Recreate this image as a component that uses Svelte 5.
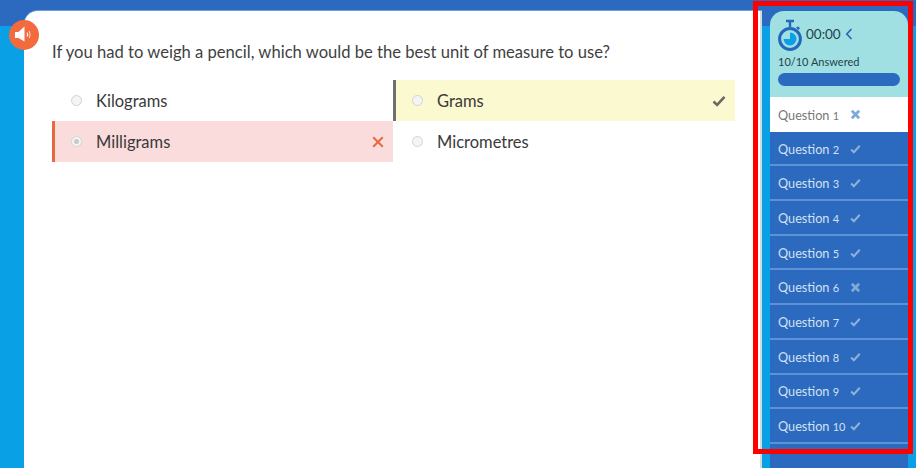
<script>
  const options = [
    { label: 'Kilograms', kind: '' },
    { label: 'Grams', kind: 'correct' },
    { label: 'Milligrams', kind: 'wrong' },
    { label: 'Micrometres', kind: '' }
  ];
  const questions = [1, 2, 3, 4, 5, 6, 7, 8, 9, 10].map((n) => ({ n, wrong: n === 1 || n === 6 }));
</script>

<div class="page">
  <header class="topbar"></header>
  <div class="body">
    <main class="card">
      <button class="sound" aria-label="Read aloud">
        <svg viewBox="0 0 30 30" width="30" height="30">
          <path d="M6 12h3.500l6-5.500v15L9.500 18H6z" fill="#fff" />
          <path d="M18 12.500q1.500 2 0 4" fill="none" stroke="#fff" stroke-width="1.200" />
          <path d="M20.200 11q2 3.500 0 7" fill="none" stroke="#fff" stroke-width="1" opacity=".75" />
        </svg>
      </button>
      <h1>If you had to weigh a pencil, which would be the best unit of measure to use?</h1>
      <div class="options">
        {#each options as o}
          <div class="option {o.kind}">
            <span class="radio"></span>
            <span class="label">{o.label}</span>
            {#if o.kind === 'correct'}
              <svg class="mark" viewBox="0 0 14 12" width="14" height="12"><path d="M1.500 6.500l3.600 3.400 7.400-8" fill="none" stroke="#6b6862" stroke-width="2.600" /></svg>
            {:else if o.kind === 'wrong'}
              <svg class="mark" viewBox="0 0 12 12" width="12" height="12"><path d="M1.200 1.200l9.600 9.600M10.800 1.200l-9.600 9.600" fill="none" stroke="#e8683f" stroke-width="2" /></svg>
            {/if}
          </div>
        {/each}
      </div>
    </main>
    <aside class="side">
      <div class="summary">
        <div class="timer">
          <svg class="watch" viewBox="0 0 24 33" width="24" height="33">
            <path d="M8 2h8M12 2v6" stroke="#2468bb" stroke-width="2.400" fill="none" />
            <path d="M19 8l2.200 2.200" stroke="#2468bb" stroke-width="2.400" />
            <circle cx="12" cy="20" r="10.400" fill="none" stroke="#2468bb" stroke-width="3" />
            <path d="M12 20V13.500A6.500 6.500 0 1 1 5.500 20z" fill="#0aa0e6" />
          </svg>
          <span class="time">00:00</span>
          <svg class="chev" viewBox="0 0 8 12" width="8" height="12"><path d="M6.500 1L1.800 6l4.700 5" fill="none" stroke="#2b6abf" stroke-width="1.800" /></svg>
        </div>
        <div class="answered">10/10 Answered</div>
        <div class="progress"></div>
      </div>
      <ul>
        {#each questions as q}
          <li class:current={q.n === 1}>
            <span class="q">Question <span class="num">{q.n}</span></span>
            {#if q.wrong}
              <svg viewBox="0 0 12 12" width="11" height="11"><path d="M2 2l8 8M10 2l-8 8" fill="none" stroke="#7fa9d6" stroke-width="3" /></svg>
            {:else}
              <svg viewBox="0 0 12 10" width="11" height="10"><path d="M1.200 5.500l3 3 6.400-7" fill="none" stroke="#8fb2dc" stroke-width="2.200" /></svg>
            {/if}
          </li>
        {/each}
      </ul>
    </aside>
  </div>
  <div class="highlight"></div>
</div>

<style>
  :global(body) { margin: 0; }
  .page {
    position: relative;
    width: 916px;
    height: 468px;
    overflow: hidden;
    background: #0aa0e6;
    font-family: Lato, "Noto Sans", sans-serif;
    color: #3d3d3d;
  }
  .topbar { position: absolute; inset: 0 0 auto 0; height: 26px; background: #2b6abf; }
  .body { position: relative; display: flex; gap: 8px; padding: 11px 0 0 24px; height: 457px; }
  .card {
    position: relative;
    width: 738px;
    flex: none;
    box-sizing: border-box;
    background: #fff;
    border-top-left-radius: 14px;
    border-right: 2px solid #d3dcdc;
    padding: 31px 0 0 28px;
    box-shadow: 0 -1px 0 #6f9fdb;
  }
  .sound {
    position: absolute;
    left: -15px;
    top: 9px;
    width: 30px;
    height: 30px;
    padding: 0;
    border: 0;
    border-radius: 50%;
    background: #f26a3d;
  }
  .sound svg { display: block; }
  h1 { margin: 0; font-size: 16.6px; font-weight: 400; line-height: 20px; color: #3f3f3f; }
  .options { display: grid; grid-template-columns: 341px 342px; grid-auto-rows: 41px; margin-top: 18px; }
  .option { display: flex; align-items: center; padding: 0 9px 0 19px; box-sizing: border-box; font-size: 16.5px; }
  .option.correct { background: #fbf9d0; box-shadow: inset 3px 0 0 #6f6f6f; }
  .option.wrong { background: #fadcdc; box-shadow: inset 3px 0 0 #e8683f; }
  .option.wrong .radio::after { content: ""; position: absolute; inset: 2px; border-radius: 50%; background: #c9c9c9; }
  .radio { position: relative; width: 9px; height: 9px; flex: none; border: 1px solid #d4d4d4; border-radius: 50%; background: #f4f4f4; margin-right: 14px; }
  .label { flex: 1; color: #3a3a3a; }
  .side { width: 138px; flex: none; color: #fff; background: #2b6abf; border-radius: 14px 14px 0 0; }
  .summary { background: #a0e0e2; height: 86px; box-sizing: border-box; padding: 8px 8px 0; border-radius: 14px 14px 0 0; color: #24424a; }
  .timer { display: flex; align-items: center; gap: 4px; height: 33px; }
  .watch { flex: none; }
  .time { font-size: 13.5px; margin-bottom: 4px; }
  .chev { margin-bottom: 4px; }
  .answered { font-size: 11px; line-height: 13px; margin-top: 3px; }
  .progress { height: 13px; border-radius: 7px; background: #2b6abf; margin-top: 5px; }
  ul { margin: 0; padding: 0; list-style: none; }
  li { display: flex; align-items: center; height: 34.7px; box-sizing: border-box; padding: 1px 0 0 8px; font-size: 12.7px; border-bottom: 2px solid #5b93d6; color: #d3e1f2; }
  li.current { background: #fff; color: #777; border-bottom: 0; }
  .q { width: 72px; flex: none; }
  .num { font-size: 11px; }
  .highlight { position: absolute; left: 753px; top: 1px; width: 160px; height: 453px; box-sizing: border-box; border: 5px solid #ff0000; pointer-events: none; }
</style>
